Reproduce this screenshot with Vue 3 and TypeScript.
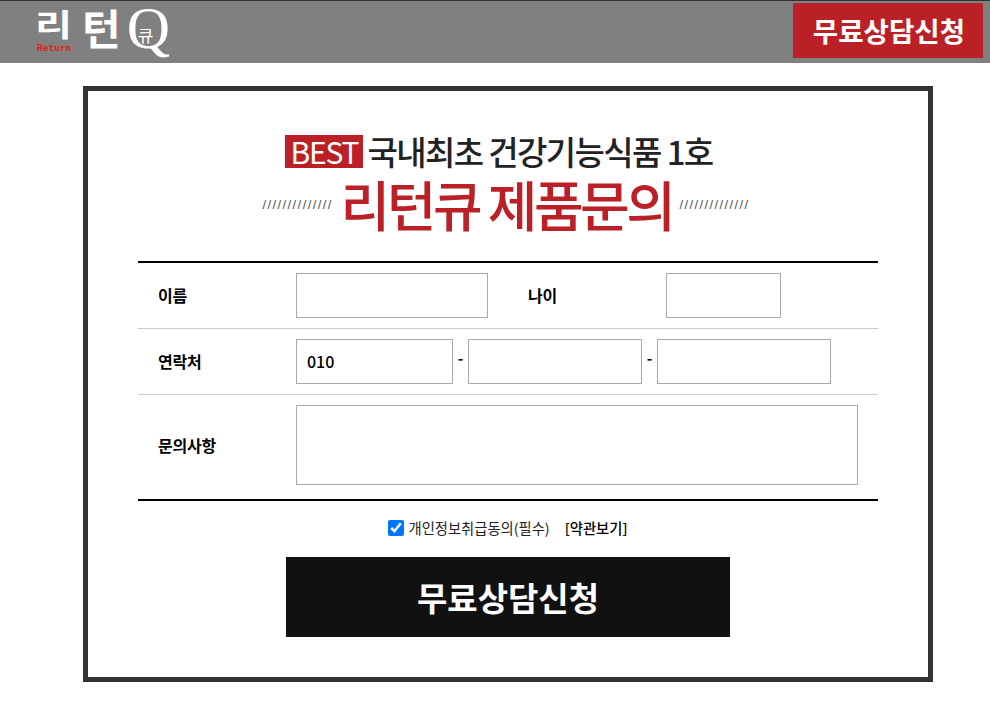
<script setup lang="ts">
import { ref } from 'vue'

const phoneFirst = ref<string>('010')
const agreed = ref<boolean>(true)
</script>

<template>
  <div class="page">
    <header class="topbar">
      <div class="logo">
        <div class="logo-left">
          <span class="logo-ri">리</span>
          <small class="logo-en">Return</small>
        </div>
        <span class="logo-teon">턴</span>
        <span class="logo-q">Q<small class="logo-q-inner">큐</small></span>
      </div>
      <button class="top-cta" type="button">무료상담신청</button>
    </header>

    <main class="card">
      <div class="heading">
        <div class="sub-title">
          <span class="best">BEST</span>
          <span>국내최초 건강기능식품 1호</span>
        </div>
        <div class="main-title">
          <span class="slashes">//////////////</span>
          <h1>리턴큐 제품문의</h1>
          <span class="slashes">//////////////</span>
        </div>
      </div>

      <form class="form" @submit.prevent>
        <div class="row">
          <label class="label">이름</label>
          <input class="field name" type="text" />
          <label class="label age-label">나이</label>
          <input class="field age" type="text" />
        </div>
        <div class="row">
          <label class="label">연락처</label>
          <input v-model="phoneFirst" class="field phone-first" type="text" />
          <span class="dash">-</span>
          <input class="field phone" type="text" />
          <span class="dash">-</span>
          <input class="field phone" type="text" />
        </div>
        <div class="row message-row">
          <label class="label message-label">문의사항</label>
          <textarea class="field message"></textarea>
        </div>

        <div class="agree">
          <input v-model="agreed" class="check" type="checkbox" />
          <span>개인정보취급동의(필수)</span>
          <a class="terms">[약관보기]</a>
        </div>

        <button class="submit" type="submit">무료상담신청</button>
      </form>
    </main>
  </div>
</template>

<style scoped>
.page {
  width: 990px;
  height: 726px;
  overflow: hidden;
  background: #fff;
  font-family: "Noto Sans CJK KR", "Noto Sans", sans-serif;
  color: #000;
}

.topbar {
  height: 63px;
  box-sizing: border-box;
  border-top: 1px solid #333;
  background: #808080;
  display: flex;
  align-items: flex-start;
  justify-content: space-between;
  padding: 2px 7px 0 35px;
}

.logo {
  display: flex;
  align-items: flex-start;
  color: #fff;
  height: 58px;
}

.logo-left {
  display: flex;
  flex-direction: column;
  width: 38px;
}

.logo-ri {
  display: block;
  width: 38px;
  height: 36px;
  margin-top: 4px;
  font-size: 36px;
  line-height: 36px;
  font-weight: 700;
  transform: scale(1.12, 0.84);
  transform-origin: left top;
}

.logo-en {
  display: block;
  margin: 0 0 0 2px;
  font-family: "DejaVu Sans Mono", monospace;
  font-size: 9.5px;
  line-height: 10px;
  font-weight: 700;
  color: #e02027;
  white-space: nowrap;
}

.logo-teon {
  display: block;
  margin: 2px 0 0 9px;
  font-size: 42px;
  line-height: 44px;
  font-weight: 700;
}

.logo-q {
  position: relative;
  margin: -3px 0 0 6px;
  font-family: "Liberation Serif", serif;
  font-size: 60px;
  line-height: 56px;
}

.logo-q-inner {
  position: absolute;
  left: 11px;
  top: 25px;
  font-family: "Noto Sans CJK KR", sans-serif;
  font-size: 17px;
  line-height: 20px;
}

.top-cta {
  width: 190px;
  height: 55px;
  border: 0;
  padding: 0 0 0 2px;
  background: #bb2026;
  color: #fff;
  font-family: inherit;
  font-size: 27.6px;
  font-weight: 700;
  line-height: 55px;
}

.card {
  box-sizing: border-box;
  width: 850px;
  height: 596px;
  margin: 23px 0 0 83px;
  border: 5px solid #333;
  padding: 0 50px;
  background: #fff;
}

.heading {
  height: 170px;
  padding-top: 43px;
  box-sizing: border-box;
}

.sub-title {
  display: flex;
  justify-content: center;
  align-items: center;
  gap: 4px;
  height: 34px;
  padding-right: 18px;
  font-size: 33px;
  line-height: 32px;
  font-weight: 500;
  letter-spacing: -1.6px;
  color: #222;
}

.best {
  width: 78px;
  height: 33px;
  background: #bb2026;
  color: #fff;
  font-size: 30px;
  line-height: 33px;
  text-align: center;
  font-weight: 400;
  letter-spacing: -1.2px;
}

.main-title {
  display: flex;
  justify-content: center;
  align-items: center;
  gap: 7px;
  margin-top: 10px;
  height: 52px;
  padding-right: 3px;
}

.main-title h1 {
  margin: 0;
  font-size: 54px;
  line-height: 52px;
  font-weight: 500;
  letter-spacing: -3.5px;
  color: #bb2026;
}

.slashes {
  width: 71px;
  margin-top: 2px;
  font-family: "Liberation Sans", sans-serif;
  font-size: 13px;
  line-height: 16px;
  letter-spacing: 1.4px;
  color: #555;
  white-space: nowrap;
}

.form {
  border-top: 2px solid #000;
}

.row {
  display: flex;
  align-items: center;
  height: 65px;
  border-bottom: 1px solid #ccc;
  padding-left: 20px;
}

.label {
  width: 138px;
  flex: none;
  margin-bottom: 2px;
  font-size: 16px;
  font-weight: 700;
  line-height: 20px;
  letter-spacing: -0.2px;
}

.age-label {
  width: 138px;
  margin-left: 40px;
}

.field {
  box-sizing: border-box;
  height: 45px;
  border: 1px solid #aaa;
  border-radius: 0;
  padding: 0 10px 2px;
  font-family: inherit;
  font-size: 16px;
  font-weight: 500;
  background: #fff;
  color: #000;
  outline: none;
}

.name {
  width: 192px;
}

.age {
  width: 115px;
}

.phone-first {
  width: 157px;
}

.phone {
  width: 174px;
}

.dash {
  width: 15px;
  flex: none;
  font-size: 15px;
  font-weight: 700;
  text-align: center;
  line-height: 22px;
  margin-top: -7px;
}

.message-row {
  align-items: flex-start;
  padding-top: 10px;
  box-sizing: border-box;
  border-bottom: 2px solid #000;
  height: 106px;
}

.message-label {
  line-height: 80px;
}

.message {
  width: 562px;
  height: 80px;
  resize: none;
  display: block;
}

.agree {
  display: flex;
  align-items: center;
  justify-content: center;
  height: 20px;
  margin-top: 17px;
  font-size: 14.3px;
  line-height: 20px;
  color: #222;
  padding-right: 1px;
}

.check {
  width: 16px;
  height: 16px;
  margin: 0 5px 0 0;
}

.terms {
  margin-left: 15px;
  font-weight: 500;
  color: #000;
}

.submit {
  display: block;
  width: 444px;
  height: 80px;
  margin: 19px 0 0 148px;
  border: 0;
  padding: 0;
  background: #111;
  color: #fff;
  font-family: inherit;
  font-size: 33px;
  font-weight: 700;
  line-height: 78px;
}
</style>
